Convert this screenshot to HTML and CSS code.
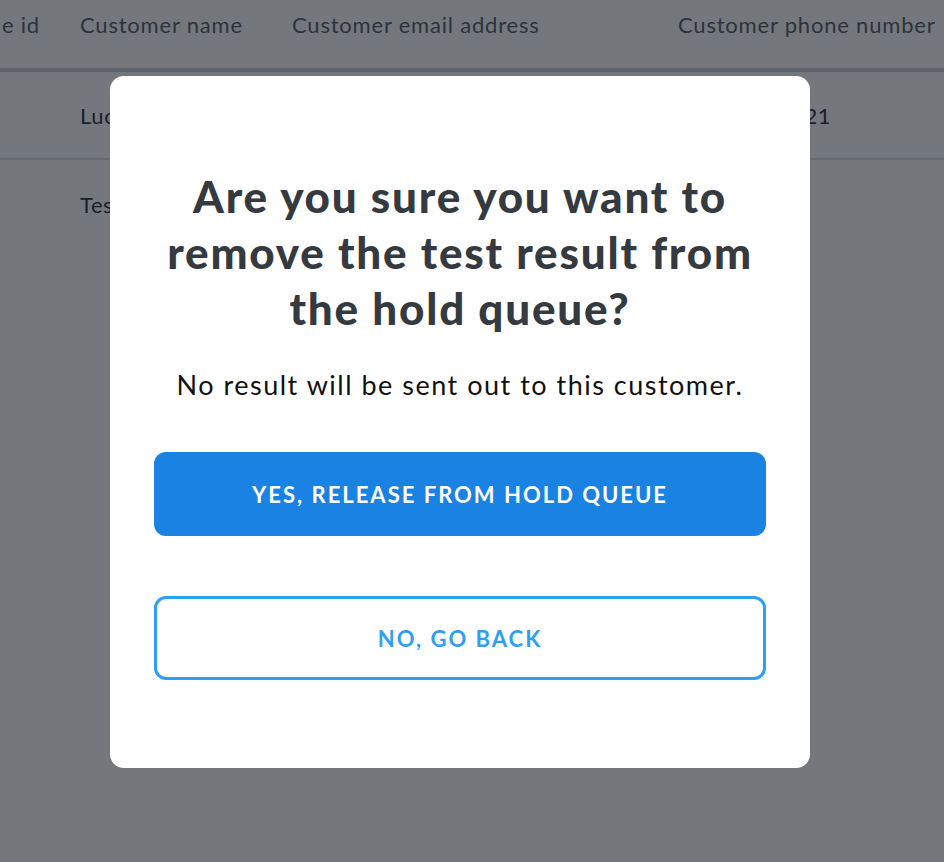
FILE: index.html
```html
<!DOCTYPE html>
<html lang="en">
<head>
<meta charset="utf-8">
<title>Hold queue</title>
<link rel="stylesheet" href="styles.css">
</head>
<body>
<div class="table">
  <div class="row head">
    <div class="cell first">Sample id</div>
    <div class="cell">Customer name</div>
    <div class="cell">Customer email address</div>
    <div class="cell">Customer phone number</div>
  </div>
  <div class="row">
    <div class="cell first">1042</div>
    <div class="cell">Lucy Adams</div>
    <div class="cell">lucy.adams@example.com</div>
    <div class="cell">07700 900121</div>
  </div>
  <div class="row last">
    <div class="cell first">1043</div>
    <div class="cell">Test User</div>
    <div class="cell"></div>
    <div class="cell"></div>
  </div>
</div>

<div class="overlay">
  <div class="modal" role="dialog">
    <h1 class="title">Are you sure you want to remove the test result from the hold queue?</h1>
    <p class="sub">No result will be sent out to this customer.</p>
    <div class="actions">
      <button class="btn primary">YES, RELEASE FROM HOLD QUEUE</button>
      <button class="btn secondary">NO, GO BACK</button>
    </div>
  </div>
</div>
</body>
</html>
```

FILE: styles.css
```css
* { box-sizing: border-box; }
html, body { margin: 0; padding: 0; }
body {
  width: 944px;
  height: 862px;
  overflow: hidden;
  background: #ffffff;
  font-family: Lato, "Liberation Sans", sans-serif;
  color: #1c2430;
}
.table { display: flex; flex-direction: column; }
.row {
  display: grid;
  grid-template-columns: 80px 212px 386px 266px;
  height: 88px;
  align-items: center;
  border-bottom: 2px solid #dcdfe3;
  font-size: 22px;
  letter-spacing: 0.6px;
}
.row.head {
  height: 72px;
  border-bottom: 4px solid #c9cdd2;
  color: #4a5560;
  align-items: start;
  padding-top: 11px;
  letter-spacing: 0.8px;
}
.row.last { border-bottom: none; }
.cell { white-space: nowrap; overflow: visible; }
.cell.first {
  display: flex;
  justify-content: flex-end;
  padding-right: 40px;
}
.row:not(.head) .cell.first { visibility: hidden; }

.overlay {
  position: fixed;
  inset: 0;
  background: rgba(23, 30, 38, 0.6);
  display: flex;
  align-items: flex-start;
  justify-content: flex-start;
  padding: 76px 0 0 110px;
}
.modal {
  width: 700px;
  height: 692px;
  background: #ffffff;
  border-radius: 14px;
  padding: 92px 44px 0;
  display: flex;
  flex-direction: column;
  align-items: center;
}
.title {
  margin: 0;
  font-size: 44px;
  line-height: 56px;
  font-weight: 900;
  letter-spacing: 1.8px;
  color: #343a40;
  text-align: center;
  width: 600px;
}
.sub {
  margin: 31px 0 0;
  font-size: 27px;
  line-height: 36px;
  letter-spacing: 1.5px;
  color: #111111;
  text-align: center;
}
.actions {
  margin-top: 49px;
  width: 612px;
  display: flex;
  flex-direction: column;
  gap: 60px;
}
.btn {
  height: 84px;
  border-radius: 12px;
  font-family: inherit;
  font-size: 22px;
  font-weight: 700;
  letter-spacing: 2px;
  cursor: pointer;
}
.primary {
  background: #1a82e2;
  color: #ffffff;
  border: none;
}
.secondary {
  background: #ffffff;
  color: #2f9ef5;
  border: 3px solid #2f9ef5;
}
```
